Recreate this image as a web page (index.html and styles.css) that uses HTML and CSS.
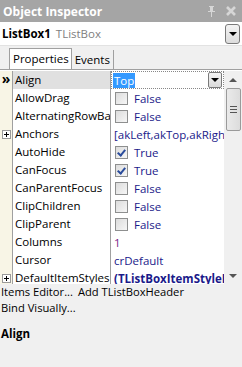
FILE: index.html
```html
<!DOCTYPE html>
<html>
<head>
    <meta charset="UTF-8">
    <title>Object Inspector</title>
    <link rel="stylesheet" href="styles.css">
</head>
<body>
    <div class="inspector">
        <div class="title-bar">
            <span class="title">Object Inspector</span>
            <span class="title-icons">
                <svg width="9" height="11" viewBox="0 0 9 11"><path d="M2 0h5v1H6v4h2v1H5v5H4V6H1V5h2V1H2z" fill="#d6d6d6"/></svg>
                <svg width="10" height="10" viewBox="0 0 10 10"><path d="M1 1l8 8M9 1l-8 8" stroke="#d6d6d6" stroke-width="2.6"/></svg>
            </span>
        </div>

        <div class="selector">
            <span class="obj-name">ListBox1</span>
            <span class="obj-type">TListBox</span>
            <span class="combo-btn"><i class="arrow-down"></i></span>
        </div>

        <div class="tabs">
            <span class="tab active">Properties</span>
            <span class="tab">Events</span>
        </div>

        <div class="grid-wrap">
            <div class="grid">
                <div class="row selected">
                    <span class="gutter"><b class="marker">&raquo;</b></span>
                    <span class="name">Align</span>
                    <span class="value edit"><span class="hl">Top</span><span class="drop-btn"><i class="arrow-down"></i></span></span>
                </div>
                <div class="row">
                    <span class="gutter"></span>
                    <span class="name">AllowDrag</span>
                    <span class="value"><i class="check"></i>False</span>
                </div>
                <div class="row">
                    <span class="gutter"></span>
                    <span class="name">AlternatingRowBackground</span>
                    <span class="value"><i class="check"></i>False</span>
                </div>
                <div class="row">
                    <span class="gutter"><i class="plus"></i></span>
                    <span class="name">Anchors</span>
                    <span class="value">[akLeft,akTop,akRight]</span>
                </div>
                <div class="row">
                    <span class="gutter"></span>
                    <span class="name">AutoHide</span>
                    <span class="value"><i class="check on"></i>True</span>
                </div>
                <div class="row">
                    <span class="gutter"></span>
                    <span class="name">CanFocus</span>
                    <span class="value"><i class="check on"></i>True</span>
                </div>
                <div class="row">
                    <span class="gutter"></span>
                    <span class="name">CanParentFocus</span>
                    <span class="value"><i class="check"></i>False</span>
                </div>
                <div class="row">
                    <span class="gutter"></span>
                    <span class="name">ClipChildren</span>
                    <span class="value"><i class="check"></i>False</span>
                </div>
                <div class="row">
                    <span class="gutter"></span>
                    <span class="name">ClipParent</span>
                    <span class="value"><i class="check"></i>False</span>
                </div>
                <div class="row">
                    <span class="gutter"></span>
                    <span class="name">Columns</span>
                    <span class="value number">1</span>
                </div>
                <div class="row">
                    <span class="gutter"></span>
                    <span class="name">Cursor</span>
                    <span class="value">crDefault</span>
                </div>
                <div class="row">
                    <span class="gutter"><i class="plus"></i></span>
                    <span class="name">DefaultItemStyles</span>
                    <span class="value bold">(TListBoxItemStyleDefaults)</span>
                </div>
            </div>
            <div class="scrollbar">
                <span class="sb-arrow"><i class="sb-up"></i></span>
                <span class="sb-thumb"><i></i><i></i><i></i></span>
                <span class="sb-track"></span>
                <span class="sb-arrow"><i class="sb-down"></i></span>
            </div>
        </div>

        <div class="links">
            <div><span>Items Editor...</span> <span>Add TListBoxHeader</span></div>
            <div><span>Bind Visually...</span></div>
        </div>

        <div class="desc">Align</div>
    </div>
</body>
</html>
```

FILE: styles.css
```css
body {
    margin: 0;
    padding: 0;
    font-family: 'Open Sans', 'Liberation Sans', sans-serif;
    font-size: 11px;
    background-color: #f0f0f0;
}
.inspector {
    width: 242px;
    height: 367px;
    overflow: hidden;
    background-color: #f0f0f0;
}
.title-bar {
    height: 22px;
    background-color: #a5a5a5;
    display: flex;
    align-items: center;
    justify-content: space-between;
    padding: 0 6px 0 3px;
}
.title {
    color: #fff;
    font-weight: bold;
    font-size: 12px;
}
.title-icons {
    display: flex;
    align-items: center;
    gap: 10px;
}
.selector {
    height: 23px;
    background-color: #fff;
    display: flex;
    align-items: center;
    padding-left: 2px;
    border-bottom: 1px solid #e2e2e2;
}
.obj-name {
    font-weight: bold;
    font-size: 11.5px;
    margin-right: 5px;
}
.obj-type {
    color: #808080;
    font-size: 11.5px;
}
.combo-btn {
    margin-left: auto;
    margin-right: 2px;
    width: 13px;
    height: 18px;
    border: 1px solid #7a7a7a;
    border-radius: 3px;
    background: linear-gradient(#f4f4f4, #dcdcdc);
    display: flex;
    align-items: center;
    justify-content: center;
}
.arrow-down {
    width: 0;
    height: 0;
    border-left: 4px solid transparent;
    border-right: 4px solid transparent;
    border-top: 4px solid #000;
}
.tabs {
    height: 21px;
    display: flex;
    align-items: flex-end;
    padding-left: 9px;
    border-bottom: 1px solid #a0a0a0;
    margin-top: 2px;
}
.tab {
    height: 19px;
    line-height: 19px;
    padding: 0 3px;
    font-size: 11.5px;
    border-right: 1px solid #a0a0a0;
}
.tab.active {
    background-color: #fff;
    border: 1px solid #a0a0a0;
    border-bottom: none;
    height: 20px;
    padding: 0 2px 0 3px;
}
.grid-wrap {
    display: flex;
    height: 213px;
    background-color: #fff;
    border-top: 1px solid #fff;
}
.grid {
    width: 224px;
    overflow: hidden;
}
.row {
    display: grid;
    grid-template-columns: 13px 98px 113px;
    height: 18px;
    font-size: 11.5px;
}
.row span {
    white-space: nowrap;
    overflow: hidden;
}
.gutter {
    background-color: #f8f5e6;
    border-right: 1px solid #a0a0a0;
    display: flex;
    align-items: center;
    justify-content: center;
}
.marker {
    font-size: 14px;
    line-height: 14px;
    margin-top: -3px;
}
.plus {
    width: 7px;
    height: 7px;
    border: 1px solid #9a9a9a;
    background: linear-gradient(#000, #000) center / 5px 1px no-repeat,
                linear-gradient(#000, #000) center / 1px 5px no-repeat,
                #fff;
}
.name {
    padding-left: 2px;
    line-height: 18px;
    border-right: 1px solid #a0a0a0;
    color: #000;
}
.selected .name {
    background-color: #e0e0e0;
}
.value {
    display: flex;
    align-items: center;
    padding-left: 3px;
    color: #1a1a8a;
}
.value.number {
    color: #7a1a8a;
}
.value.bold {
    font-weight: bold;
}
.value.edit {
    padding-left: 1px;
    border: 1px dotted #888;
    height: 16px;
    justify-content: space-between;
}
.hl {
    background-color: #3399ff;
    color: #fff;
    line-height: 15px;
    padding: 0 1px;
}
.drop-btn {
    width: 12px;
    height: 14px;
    border: 1px solid #7a7a7a;
    border-radius: 2px;
    background: linear-gradient(#f4f4f4, #dadada);
    display: flex;
    align-items: center;
    justify-content: center;
    margin-right: 1px;
}
.check {
    width: 11px;
    height: 11px;
    border: 1px solid #8e8f8f;
    background: linear-gradient(135deg, #dcdcdc, #f6f6f6);
    margin: 0 6px 0 1px;
    flex-shrink: 0;
    position: relative;
}
.check.on::after {
    content: "";
    position: absolute;
    left: 3px;
    top: 1px;
    width: 3px;
    height: 6px;
    border-right: 2px solid #2a4c9c;
    border-bottom: 2px solid #2a4c9c;
    transform: rotate(40deg);
}
.scrollbar {
    width: 18px;
    background-color: #f0f0f0;
    display: flex;
    flex-direction: column;
    align-items: center;
}
.sb-arrow {
    height: 17px;
    display: flex;
    align-items: center;
    justify-content: center;
}
.sb-up {
    border-left: 4px solid transparent;
    border-right: 4px solid transparent;
    border-bottom: 4px solid #555;
}
.sb-down {
    border-left: 4px solid transparent;
    border-right: 4px solid transparent;
    border-top: 4px solid #555;
}
.sb-thumb {
    width: 13px;
    height: 41px;
    border: 1px solid #9a9a9a;
    border-radius: 2px;
    background: linear-gradient(90deg, #eaeaea, #dcdcdc);
    display: flex;
    flex-direction: column;
    justify-content: center;
    align-items: center;
    gap: 2px;
}
.sb-thumb i {
    width: 7px;
    height: 1px;
    background-color: #555;
}
.sb-track {
    flex: 1;
}
.links {
    padding: 0 0 0 1px;
    font-size: 11.2px;
    line-height: 16px;
}
.links span {
    margin-right: 2px;
}
.desc {
    margin-top: 10px;
    padding-left: 1px;
    font-weight: bold;
    font-size: 11.5px;
}
```
